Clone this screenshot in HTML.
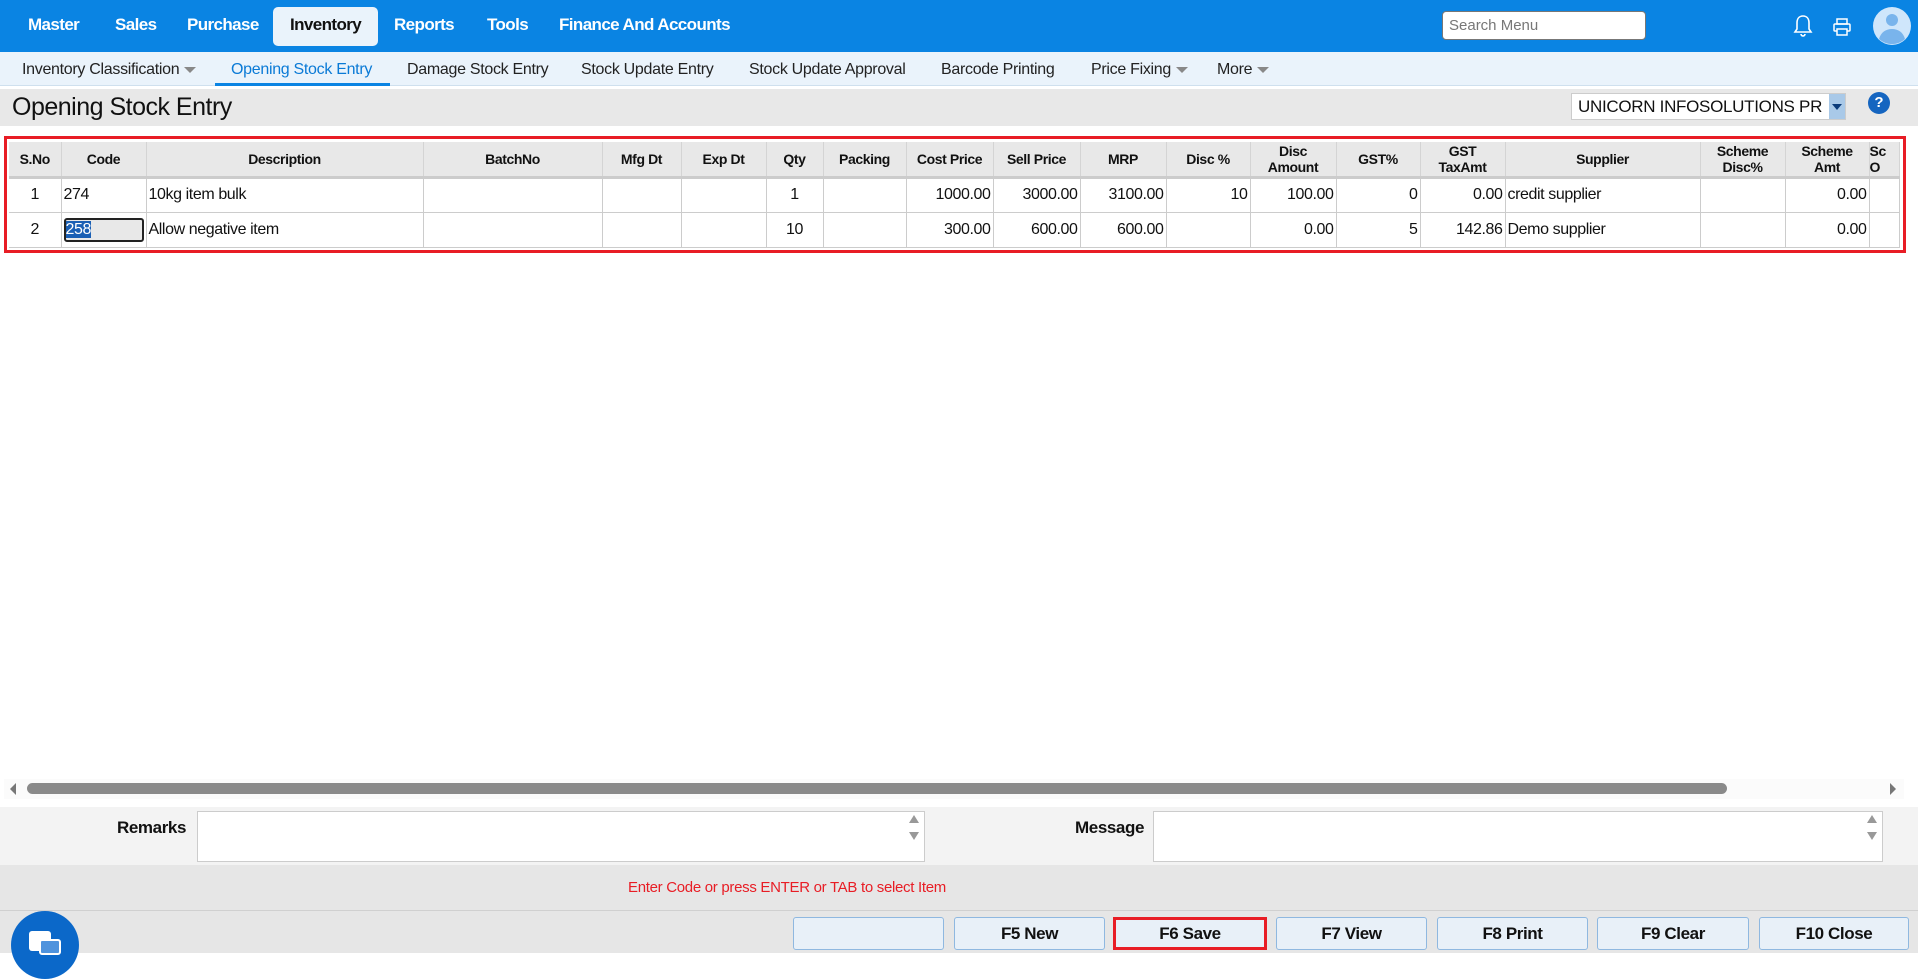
<!DOCTYPE html>
<html><head><meta charset="utf-8"><style>
*{box-sizing:border-box;margin:0;padding:0}
body{width:1918px;height:953px;overflow:hidden;background:#fff;font-family:"Liberation Sans",sans-serif;position:relative;color:#111}
.abs{position:absolute}
.top{left:0;top:0;width:1918px;height:52px;background:#0a84e3}
.top .m{position:absolute;top:15px;color:#fff;font-weight:bold;font-size:17px;letter-spacing:-0.6px}
.inv{left:273px;top:7px;width:105px;height:39px;background:#eaf3fb;border-radius:5px}
.sub{left:0;top:52px;width:1918px;height:34px;background:#eaf3fb;border-bottom:1px solid #cfe0ee}
.sub span{position:absolute;top:9px;font-size:16px;color:#222;letter-spacing:-0.3px}
.car{display:inline-block;width:0;height:0;border-left:6px solid transparent;border-right:6px solid transparent;border-top:6px solid #888;margin-left:5px;vertical-align:middle}
.tb{left:0;top:89px;width:1918px;height:37px;background:#e8e8e8}
table{border-collapse:collapse;table-layout:fixed;position:absolute;left:9px;top:142px}
th{background:#e8e8e8;font-size:14px;font-weight:bold;height:35px;border-right:1px solid #d4d4d4;border-bottom:3px solid #ccc;line-height:16px;letter-spacing:-0.4px}
td{height:35px;font-size:16px;border-right:1px solid #ccc;border-bottom:1px solid #ccc;padding:0 2px;white-space:nowrap;overflow:hidden;letter-spacing:-0.4px}
.r{text-align:right}.c{text-align:center}
.btn{position:absolute;top:917px;height:33px;background:#e8f0f8;border:1px solid #8fb8e0;border-radius:3px;font-size:17px;font-weight:bold;text-align:center;line-height:31px;letter-spacing:-0.4px}
textarea{position:absolute;border:1px solid #ccc;background:#fff;resize:none}
.sa{position:absolute;width:0;height:0;border-left:5px solid transparent;border-right:5px solid transparent}
</style></head><body>
<div class="abs top">
 <div class="abs inv"></div>
 <span class="m" style="left:28px">Master</span>
 <span class="m" style="left:115px">Sales</span>
 <span class="m" style="left:187px">Purchase</span>
 <span class="m" style="left:290px;color:#111">Inventory</span>
 <span class="m" style="left:394px">Reports</span>
 <span class="m" style="left:487px">Tools</span>
 <span class="m" style="left:559px">Finance And Accounts</span>
 <div class="abs" style="left:1442px;top:11px;width:204px;height:29px;background:#fff;border:1px solid #777;border-radius:4px;font-size:15px;color:#777;padding:5px 6px">Search Menu</div>
 <svg class="abs" style="left:1793px;top:14px" width="20" height="24" viewBox="0 0 20 24"><path d="M10 2c-4 0-6 3-6 7v6l-2 3h16l-2-3V9c0-4-2-7-6-7z M8 20a2 2 0 0 0 4 0" fill="none" stroke="#fff" stroke-width="1.6"/></svg>
 <svg class="abs" style="left:1832px;top:17px" width="20" height="20" viewBox="0 0 20 20"><rect x="5" y="2" width="10" height="5" fill="none" stroke="#fff" stroke-width="1.5"/><rect x="2" y="7" width="16" height="7" rx="1" fill="none" stroke="#fff" stroke-width="1.5"/><rect x="5" y="12" width="10" height="6" fill="#0a84e3" stroke="#fff" stroke-width="1.5"/></svg>
 <svg class="abs" style="left:1872px;top:6px" width="40" height="40" viewBox="0 0 40 40"><circle cx="20" cy="20" r="19" fill="#cfe6fb"/><circle cx="20" cy="14" r="6" fill="#79b4ec"/><path d="M7 33c2-7 7-10 13-10s11 3 13 10a19 19 0 0 1-26 0z" fill="#79b4ec"/></svg>
</div>
<div class="abs sub">
 <span style="left:22px">Inventory Classification<i class="car"></i></span>
 <span style="left:231px;color:#0a7ad6">Opening Stock Entry</span>
 <div class="abs" style="left:215px;top:31px;width:175px;height:3px;background:#0a84e3"></div>
 <span style="left:407px">Damage Stock Entry</span>
 <span style="left:581px">Stock Update Entry</span>
 <span style="left:749px">Stock Update Approval</span>
 <span style="left:941px">Barcode Printing</span>
 <span style="left:1091px">Price Fixing<i class="car"></i></span>
 <span style="left:1217px">More<i class="car"></i></span>
</div>
<div class="abs tb">
 <div class="abs" style="left:12px;top:4px;font-size:25px;letter-spacing:-0.5px">Opening Stock Entry</div>
 <div class="abs" style="left:1571px;top:4px;width:275px;height:27px;background:#fff;border:1px solid #ccc;font-size:17px;padding:3px 6px;letter-spacing:-0.3px">UNICORN INFOSOLUTIONS PR</div>
 <div class="abs" style="left:1829px;top:5px;width:16px;height:25px;background:#a9c9e8"><i class="abs" style="left:3px;top:10px;border-left:5px solid transparent;border-right:5px solid transparent;border-top:6px solid #0b3b7a"></i></div>
 <div class="abs" style="left:1868px;top:3px;width:22px;height:22px;border-radius:50%;background:#1565c0;color:#fff;font-weight:bold;font-size:15px;text-align:center;line-height:22px">?</div>
</div>
<div class="abs" style="left:4px;top:136px;width:1902px;height:117px;border:3px solid #e81d25"></div>
<table>
<colgroup><col style="width:52px"><col style="width:85px"><col style="width:277px"><col style="width:179px"><col style="width:79px"><col style="width:85px"><col style="width:57px"><col style="width:83px"><col style="width:87px"><col style="width:87px"><col style="width:86px"><col style="width:84px"><col style="width:86px"><col style="width:84px"><col style="width:85px"><col style="width:195px"><col style="width:85px"><col style="width:84px"><col style="width:30px"></colgroup>
<tr><th>S.No</th><th>Code</th><th>Description</th><th>BatchNo</th><th>Mfg Dt</th><th>Exp Dt</th><th>Qty</th><th>Packing</th><th>Cost Price</th><th>Sell Price</th><th>MRP</th><th>Disc %</th><th>Disc<br>Amount</th><th>GST%</th><th>GST<br>TaxAmt</th><th>Supplier</th><th>Scheme<br>Disc%</th><th>Scheme<br>Amt</th><th style="text-align:left">Sc<br>O</th></tr>
<tr><td class="c">1</td><td>274</td><td>10kg item bulk</td><td></td><td></td><td></td><td class="c">1</td><td></td><td class="r">1000.00</td><td class="r">3000.00</td><td class="r">3100.00</td><td class="r">10</td><td class="r">100.00</td><td class="r">0</td><td class="r">0.00</td><td>credit supplier</td><td></td><td class="r">0.00</td><td></td></tr>
<tr><td class="c">2</td><td><span style="display:block;border:2px solid #222;border-radius:3px;background:#e8e8e8;height:24px;line-height:20px"><span style="background:#1a5fb4;color:#fff">258</span></span></td><td>Allow negative item</td><td></td><td></td><td></td><td class="c">10</td><td></td><td class="r">300.00</td><td class="r">600.00</td><td class="r">600.00</td><td></td><td class="r">0.00</td><td class="r">5</td><td class="r">142.86</td><td>Demo supplier</td><td></td><td class="r">0.00</td><td></td></tr>
</table>
<div class="abs" style="left:4px;top:779px;width:1900px;height:20px;background:#fbfbfb"></div>
<i class="abs" style="left:10px;top:783px;border-top:6px solid transparent;border-bottom:6px solid transparent;border-right:6px solid #777"></i>
<div class="abs" style="left:27px;top:783px;width:1700px;height:11px;background:#8a8a8a;border-radius:6px"></div>
<i class="abs" style="left:1890px;top:783px;border-top:6px solid transparent;border-bottom:6px solid transparent;border-left:6px solid #777"></i>
<div class="abs" style="left:0;top:807px;width:1918px;height:58px;background:#f3f3f3"></div>
<div class="abs" style="left:117px;top:818px;font-size:17px;font-weight:bold;letter-spacing:-0.4px">Remarks</div>
<textarea style="left:197px;top:811px;width:728px;height:51px"></textarea>
<i class="sa" style="left:909px;top:815px;border-bottom:8px solid #999"></i>
<i class="sa" style="left:909px;top:832px;border-top:8px solid #999"></i>
<div class="abs" style="left:1075px;top:818px;font-size:17px;font-weight:bold;letter-spacing:-0.4px">Message</div>
<textarea style="left:1153px;top:811px;width:730px;height:51px"></textarea>
<i class="sa" style="left:1867px;top:815px;border-bottom:8px solid #999"></i>
<i class="sa" style="left:1867px;top:832px;border-top:8px solid #999"></i>
<div class="abs" style="left:0;top:865px;width:1918px;height:88px;background:#e6e6e6"></div>
<div class="abs" style="left:0;top:910px;width:1918px;height:1px;background:#d0d0d0"></div>
<div class="abs" style="left:628px;top:879px;font-size:15px;color:#e81d25;letter-spacing:-0.3px">Enter Code or press ENTER or TAB to select Item</div>
<div class="btn" style="left:793px;width:151px"></div>
<div class="btn" style="left:954px;width:151px">F5 New</div>
<div class="btn" style="left:1113px;width:154px;border:3px solid #e81d25;border-radius:0;line-height:27px">F6 Save</div>
<div class="btn" style="left:1276px;width:151px">F7 View</div>
<div class="btn" style="left:1437px;width:151px">F8 Print</div>
<div class="btn" style="left:1597px;width:152px">F9 Clear</div>
<div class="btn" style="left:1759px;width:150px">F10 Close</div>
<div class="abs" style="left:11px;top:911px;width:68px;height:68px;border-radius:50%;background:#0b68c9"></div>
<div class="abs" style="left:29px;top:931px;width:22px;height:20px;background:#fff;border-radius:3px"></div>
<div class="abs" style="left:39px;top:939px;width:22px;height:16px;background:#4f93dd;border:2px solid #fff;border-radius:3px"></div>
</body></html>
